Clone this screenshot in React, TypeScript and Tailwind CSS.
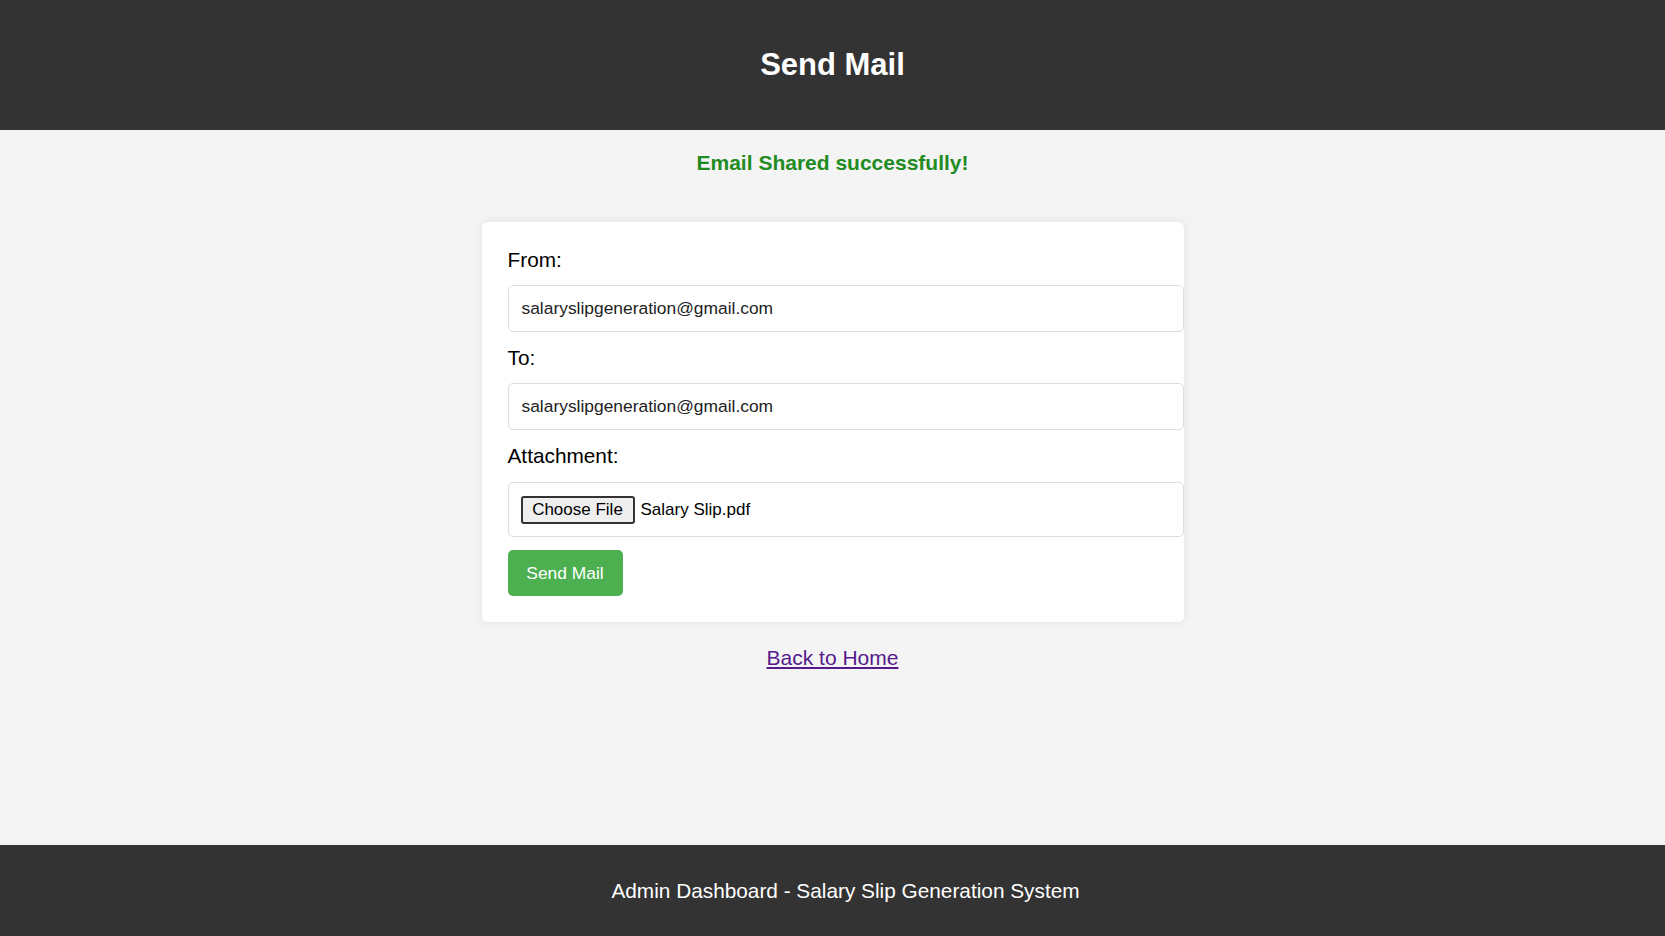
export default function App() {
  const font = { fontFamily: '"Liberation Sans", Arial, sans-serif' };

  return (
    <div className="min-h-screen flex flex-col bg-[#f4f4f4] text-black" style={font}>
      {/* Header */}
      <header className="h-[130px] bg-[#333333] flex items-center justify-center">
        <h1 className="text-[31px] font-bold text-white">Send Mail</h1>
      </header>

      <main className="flex-1 flex flex-col items-center">
        <p className="mt-[21px] text-[21px] leading-[24px] font-bold text-[#228b22]">Email Shared successfully!</p>

        {/* Card */}
        <div className="mt-[47px] w-[702px] bg-white rounded-[6px] shadow-[0_0_10px_rgba(0,0,0,0.08)] pl-[26px] pt-[26px] pb-[26px]">
          <label className="block text-[20.8px] leading-[24px] mb-[13px]">From:</label>
          <div className="h-[47px] w-[676px] border border-[#dddddd] rounded-[5px] px-[13px] flex items-center text-[17.4px] text-[#222] mb-[14px]">
            salaryslipgeneration@gmail.com
          </div>

          <label className="block text-[20.8px] leading-[24px] mb-[13px]">To:</label>
          <div className="h-[47px] w-[676px] border border-[#dddddd] rounded-[5px] px-[13px] flex items-center text-[17.4px] text-[#222] mb-[14px]">
            salaryslipgeneration@gmail.com
          </div>

          <label className="block text-[20.8px] leading-[24px] mb-[14px]">Attachment:</label>
          <div className="h-[55px] w-[676px] border border-[#dddddd] rounded-[5px] pl-[12px] flex items-center text-[17px] mb-[13px]">
            <span className="h-[28px] w-[114px] flex items-center justify-center bg-[#efefef] border-2 border-[#333] rounded-[3px] text-[17px]">
              Choose File
            </span>
            <span className="ml-[6px]">Salary Slip.pdf</span>
          </div>

          <button className="h-[46px] w-[115px] bg-[#4caf50] text-white text-[17.4px] rounded-[5px]">Send Mail</button>
        </div>

        <a href="#" className="mt-[20px] text-[21px] text-[#551a8b] underline">Back to Home</a>
      </main>

      {/* Footer */}
      <footer className="h-[91px] bg-[#333333] flex items-center justify-center pl-[26px]">
        <p className="text-[20.8px] text-white">Admin Dashboard - Salary Slip Generation System</p>
      </footer>
    </div>
  );
}
